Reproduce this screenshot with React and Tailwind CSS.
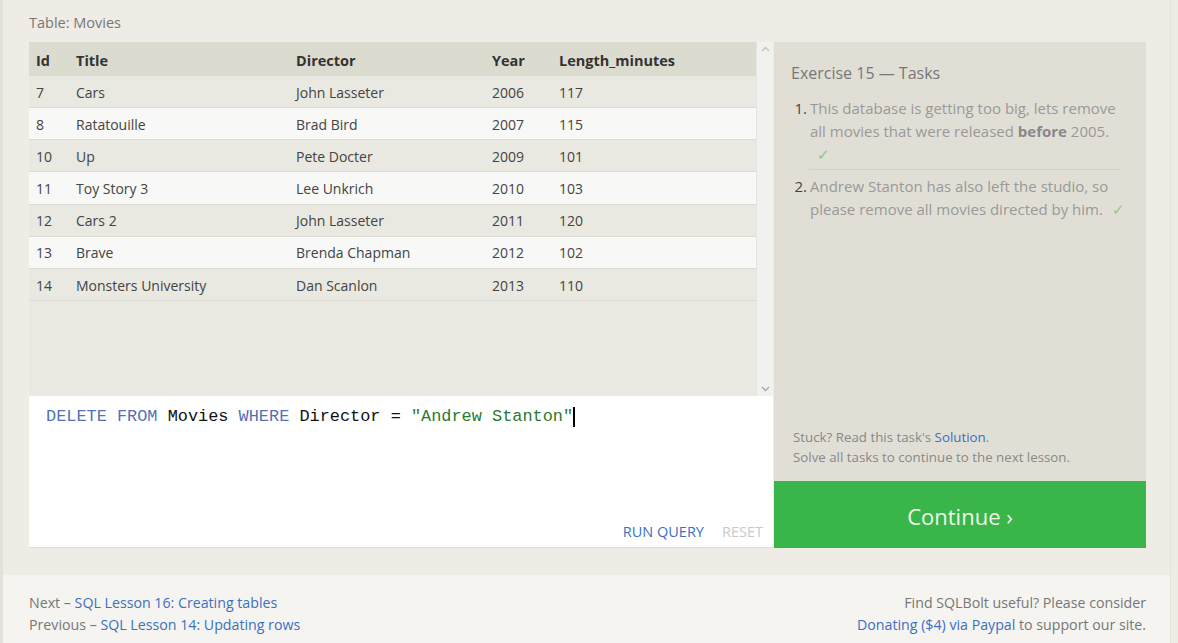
import React from "react";

const rows = [
  ["7", "Cars", "John Lasseter", "2006", "117"],
  ["8", "Ratatouille", "Brad Bird", "2007", "115"],
  ["10", "Up", "Pete Docter", "2009", "101"],
  ["11", "Toy Story 3", "Lee Unkrich", "2010", "103"],
  ["12", "Cars 2", "John Lasseter", "2011", "120"],
  ["13", "Brave", "Brenda Chapman", "2012", "102"],
  ["14", "Monsters University", "Dan Scanlon", "2013", "110"],
];

function Row({ cells, head, idx }) {
  const bg = head ? "bg-[#dcdbd0]" : idx % 2 === 0 ? "bg-[#e9e8e1]" : "bg-[#f8f8f6]";
  return (
    <div
      className={`flex items-center ${bg} ${head ? "h-[34px] pt-[3px] font-bold text-[#333] text-[14.5px]" : "h-[32.17px] pt-[1px] text-[#444] text-[14px] border-b border-[#dcdbd3]"}`}
    >
      <div className="w-[47px] pl-[7px]">{cells[0]}</div>
      <div className="w-[220px]">{cells[1]}</div>
      <div className="w-[196px]">{cells[2]}</div>
      <div className="w-[67px]">{cells[3]}</div>
      <div className="flex-1">{cells[4]}</div>
    </div>
  );
}

export default function App() {
  return (
    <div
      className="w-[1178px] h-[643px] bg-[#e4e1db] flex overflow-hidden"
      style={{ fontFamily: '"Open Sans", "Noto Sans", sans-serif' }}
    >
      <div className="ml-[3px] w-[1167px] flex flex-col">
        <div className="bg-[#efece6] h-[575px] pl-[26px] pr-[24px] pt-[12px]">
          <div className="text-[14.5px] text-[#777] h-[30px]">Table: Movies</div>
          <div className="flex">
            <div className="w-[744px] flex flex-col">
              <div className="flex h-[354px]">
                <div className="w-[727px] bg-[#e9e8e1]">
                  <Row head cells={["Id", "Title", "Director", "Year", "Length_minutes"]} />
                  {rows.map((r, i) => (
                    <Row key={i} idx={i} cells={r} />
                  ))}
                </div>
                <div className="w-[17px] bg-[#f1f1f0] border-l border-[#e4e4e2] flex flex-col items-center justify-between py-[4px]">
                  <svg width="9" height="6" viewBox="0 0 9 6">
                    <path d="M1 5 L4.5 1.5 L8 5" stroke="#c4c4c4" strokeWidth="1.4" fill="none" />
                  </svg>
                  <svg width="9" height="6" viewBox="0 0 9 6">
                    <path d="M1 1 L4.5 4.5 L8 1" stroke="#a8a8a8" strokeWidth="1.4" fill="none" />
                  </svg>
                </div>
              </div>
              <div className="bg-white h-[152px] relative border-b border-[#e0ded8]">
                <div
                  className="pl-[17px] pt-[8px] text-[16.9px] flex items-center"
                  style={{ fontFamily: '"Liberation Mono", "Courier New", monospace' }}
                >
                  <span className="text-[#5272b4] whitespace-pre">DELETE FROM </span>
                  <span className="text-[#111] whitespace-pre">Movies </span>
                  <span className="text-[#5272b4] whitespace-pre">WHERE </span>
                  <span className="text-[#111] whitespace-pre">Director = </span>
                  <span className="text-[#2d7a2d] whitespace-pre">"Andrew Stanton"</span>
                  <span className="inline-block w-[2px] h-[20px] bg-black"></span>
                </div>
                <div className="absolute right-[10px] bottom-[4px] flex gap-[18px] text-[14.5px]">
                  <span className="text-[#3b6fc2]">RUN QUERY</span>
                  <span className="text-[#c9c9c9]">RESET</span>
                </div>
              </div>
            </div>
            <div className="w-[373px] ml-[1px] flex flex-col">
              <div className="bg-[#e1dfd5] h-[439px] flex flex-col pl-[17px] pr-[18px] pt-[19px]">
                <div className="text-[16px] text-[#777] mb-[12px]">Exercise 15 — Tasks</div>
                <div className="text-[15px] text-[#999] leading-[23px]">
                  <div className="flex">
                    <span className="w-[19px] pr-[3px] text-right text-[#444]">1.</span>
                    <div className="flex-1 pb-[3px]">
                      <div>This database is getting too big, lets remove</div>
                      <div>
                        all movies that were released <b className="text-[#888]">before</b> 2005.
                      </div>
                      <div className="text-[#8bc98b] ml-[7px]">✓</div>
                    </div>
                  </div>
                  <div className="ml-[18px] mr-[8px] border-t border-[#d4d2c7] mb-[5px]"></div>
                  <div className="flex">
                    <span className="w-[19px] pr-[3px] text-right text-[#444]">2.</span>
                    <div className="flex-1">
                      <div>Andrew Stanton has also left the studio, so</div>
                      <div>
                        please remove all movies directed by him.
                        <span className="text-[#8bc98b] ml-[9px]">✓</span>
                      </div>
                    </div>
                  </div>
                </div>
                <div className="mt-auto pb-[14px] pl-[2px] text-[13.3px] text-[#888] leading-[20px]">
                  <div>
                    Stuck? Read this task's <span className="text-[#3b6fc2]">Solution</span>.
                  </div>
                  <div>Solve all tasks to continue to the next lesson.</div>
                </div>
              </div>
              <div className="bg-[#3ab54a] h-[67px] pt-[3px] flex items-center justify-center text-[22px] text-[#eef8ea]">
                Continue ›
              </div>
            </div>
          </div>
        </div>
        <div className="flex-1 bg-[#f5f4f0] pl-[26px] pr-[24px] pt-[17px] flex justify-between text-[14.2px] leading-[22px] text-[#777]">
          <div>
            <div>
              Next – <span className="text-[#3b6fc2]">SQL Lesson 16: Creating tables</span>
            </div>
            <div>
              Previous – <span className="text-[#3b6fc2]">SQL Lesson 14: Updating rows</span>
            </div>
          </div>
          <div className="text-right">
            <div>Find SQLBolt useful? Please consider</div>
            <div>
              <span className="text-[#3b6fc2]">Donating ($4) via Paypal</span> to support our site.
            </div>
          </div>
        </div>
      </div>
      <div className="w-[8px] bg-[#efece6] border-l border-[#e4e1db]"></div>
    </div>
  );
}
